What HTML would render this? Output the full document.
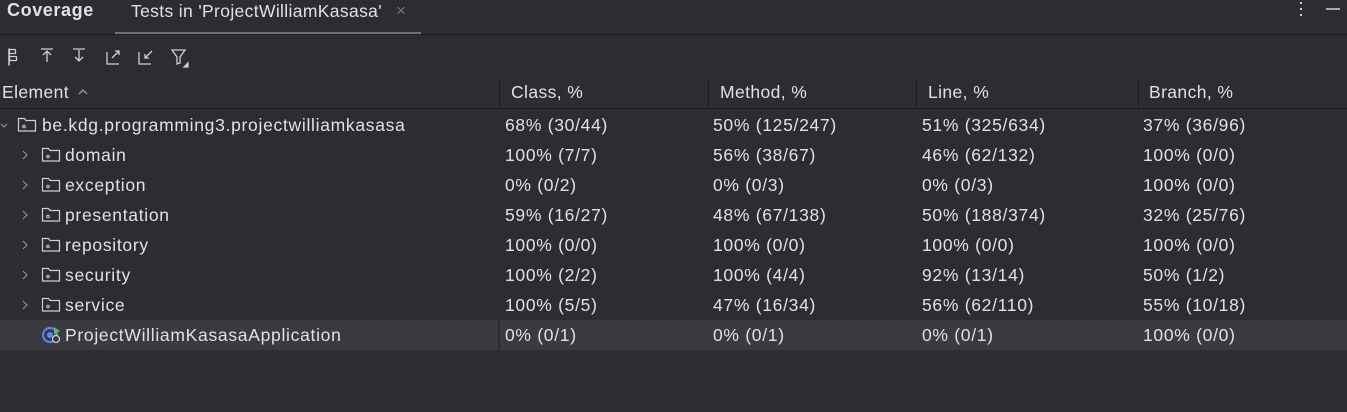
<!DOCTYPE html>
<html><head><meta charset="utf-8"><style>
body{margin:0;width:1347px;height:412px;background:#2b2d30;overflow:hidden;font-family:"Liberation Sans",sans-serif;color:#dfe1e5;position:relative}
.a{position:absolute;white-space:nowrap}
.t{font-size:17.5px;letter-spacing:0.4px}
.r{position:absolute;left:0;width:1347px;height:30px}
.r span{position:absolute;top:5px;font-size:17.5px;letter-spacing:0.7px;white-space:nowrap}
.fold{position:absolute;top:7px;left:41px}
.chev{position:absolute;top:9px;left:20px}
</style></head><body>
<div class="a" style="left:7px;top:0px;font-size:18px;font-weight:bold;color:#dfe1e5;letter-spacing:0.6px">Coverage</div>
<div class="a" style="left:131px;top:1px;font-size:17.5px;letter-spacing:0.35px">Tests in 'ProjectWilliamKasasa'</div>
<div class="a" style="left:396px;top:1px;font-size:17px;color:#6f737a">×</div>
<div class="a" style="left:115px;top:32px;width:306px;height:3px;background:#6f7278"></div>
<div class="a" style="left:0;top:34px;width:1347px;height:1px;background:#1e1f22"></div>
<div class="a" style="left:1300px;top:2px;width:2px;height:2px;background:#ccc;box-shadow:0 6px 0 #ccc,0 12px 0 #ccc"></div>
<div class="a" style="left:1326px;top:8px;width:14px;height:2px;background:#aaa"></div>
<svg class="a" style="left:0;top:44px" width="200" height="30" fill="none" stroke="#ced0d6" stroke-width="1.3">
<rect x="9" y="5" width="0.1" height="16"/>
<rect x="9.5" y="5.5" width="6" height="4" rx="0.5"/>
<rect x="9.5" y="12.5" width="7" height="4" rx="0.5"/>
<path d="M9 5v16"/>
<path d="M41 5h12M47 18v-11M43 11l4-4 4 4"/>
<path d="M73 5h12M79 6v11M75 13l4 4 4-4"/>
<path d="M107 8v12h12M112 14l7-7M115 7h4v4"/>
<path d="M139 8v12h12M152 7l-7 7M145 10v4h4"/>
<path d="M172 6h13l-5 7v6l-3 1v-7z"/>
<path d="M188 19v4h-4z" fill="#ced0d6"/>
</svg>
<div class="a" style="left:0;top:108px;width:1347px;height:1px;background:#1e1f22"></div>
<div class="a t" style="left:2px;top:82px">Element</div>
<svg class="a" style="left:77px;top:87px" width="12" height="10"><path d="M2 7l4-4 4 4" stroke="#aaa" fill="none" stroke-width="1.2"/></svg>
<div class="a" style="left:499px;top:79px;width:1px;height:29px;background:#1e1f22"></div>
<div class="a" style="left:708px;top:79px;width:1px;height:29px;background:#1e1f22"></div>
<div class="a" style="left:916px;top:79px;width:1px;height:29px;background:#1e1f22"></div>
<div class="a" style="left:1138px;top:79px;width:1px;height:29px;background:#1e1f22"></div>
<div class="a t" style="left:511px;top:82px">Class, %</div>
<div class="a t" style="left:720px;top:82px">Method, %</div>
<div class="a t" style="left:928px;top:82px">Line, %</div>
<div class="a t" style="left:1149px;top:82px">Branch, %</div>

<div class="r" style="top:110px">
<svg class="chev" style="left:0" width="10" height="12"><path d="M1 5l3 3 3-3" stroke="#999" fill="none"/></svg>
<svg class="fold" style="left:17px" width="20" height="16"><path d="M1.5 1.5h6l1.5 2h9.5v10.5h-17z" stroke="#ced0d6" fill="none" stroke-width="1.2"/><circle cx="7" cy="9.5" r="1.3" stroke="#ced0d6" fill="none"/></svg>
<span style="left:42px">be.kdg.programming3.projectwilliamkasasa</span>
<span style="left:505px">68% (30/44)</span><span style="left:713px">50% (125/247)</span><span style="left:922px">51% (325/634)</span><span style="left:1143px">37% (36/96)</span></div>

<div class="r" style="top:140px"><svg class="chev" width="10" height="12"><path d="M3 2l4 4-4 4" stroke="#999" fill="none"/></svg><svg class="fold" width="20" height="16"><path d="M1.5 1.5h6l1.5 2h9.5v10.5h-17z" stroke="#ced0d6" fill="none" stroke-width="1.2"/><circle cx="7" cy="9.5" r="1.3" stroke="#ced0d6" fill="none"/></svg>
<span style="left:65px">domain</span><span style="left:505px">100% (7/7)</span><span style="left:713px">56% (38/67)</span><span style="left:922px">46% (62/132)</span><span style="left:1143px">100% (0/0)</span></div>

<div class="r" style="top:170px"><svg class="chev" width="10" height="12"><path d="M3 2l4 4-4 4" stroke="#999" fill="none"/></svg><svg class="fold" width="20" height="16"><path d="M1.5 1.5h6l1.5 2h9.5v10.5h-17z" stroke="#ced0d6" fill="none" stroke-width="1.2"/><circle cx="7" cy="9.5" r="1.3" stroke="#ced0d6" fill="none"/></svg>
<span style="left:65px">exception</span><span style="left:505px">0% (0/2)</span><span style="left:713px">0% (0/3)</span><span style="left:922px">0% (0/3)</span><span style="left:1143px">100% (0/0)</span></div>

<div class="r" style="top:200px"><svg class="chev" width="10" height="12"><path d="M3 2l4 4-4 4" stroke="#999" fill="none"/></svg><svg class="fold" width="20" height="16"><path d="M1.5 1.5h6l1.5 2h9.5v10.5h-17z" stroke="#ced0d6" fill="none" stroke-width="1.2"/><circle cx="7" cy="9.5" r="1.3" stroke="#ced0d6" fill="none"/></svg>
<span style="left:65px">presentation</span><span style="left:505px">59% (16/27)</span><span style="left:713px">48% (67/138)</span><span style="left:922px">50% (188/374)</span><span style="left:1143px">32% (25/76)</span></div>

<div class="r" style="top:230px"><svg class="chev" width="10" height="12"><path d="M3 2l4 4-4 4" stroke="#999" fill="none"/></svg><svg class="fold" width="20" height="16"><path d="M1.5 1.5h6l1.5 2h9.5v10.5h-17z" stroke="#ced0d6" fill="none" stroke-width="1.2"/><circle cx="7" cy="9.5" r="1.3" stroke="#ced0d6" fill="none"/></svg>
<span style="left:65px">repository</span><span style="left:505px">100% (0/0)</span><span style="left:713px">100% (0/0)</span><span style="left:922px">100% (0/0)</span><span style="left:1143px">100% (0/0)</span></div>

<div class="r" style="top:260px"><svg class="chev" width="10" height="12"><path d="M3 2l4 4-4 4" stroke="#999" fill="none"/></svg><svg class="fold" width="20" height="16"><path d="M1.5 1.5h6l1.5 2h9.5v10.5h-17z" stroke="#ced0d6" fill="none" stroke-width="1.2"/><circle cx="7" cy="9.5" r="1.3" stroke="#ced0d6" fill="none"/></svg>
<span style="left:65px">security</span><span style="left:505px">100% (2/2)</span><span style="left:713px">100% (4/4)</span><span style="left:922px">92% (13/14)</span><span style="left:1143px">50% (1/2)</span></div>

<div class="r" style="top:290px"><svg class="chev" width="10" height="12"><path d="M3 2l4 4-4 4" stroke="#999" fill="none"/></svg><svg class="fold" width="20" height="16"><path d="M1.5 1.5h6l1.5 2h9.5v10.5h-17z" stroke="#ced0d6" fill="none" stroke-width="1.2"/><circle cx="7" cy="9.5" r="1.3" stroke="#ced0d6" fill="none"/></svg>
<span style="left:65px">service</span><span style="left:505px">100% (5/5)</span><span style="left:713px">47% (16/34)</span><span style="left:922px">56% (62/110)</span><span style="left:1143px">55% (10/18)</span></div>

<div class="r" style="top:320px;background:#393b40">
<div style="position:absolute;left:498px;top:0;width:2px;height:30px;background:#2b2d30"></div>
<svg style="position:absolute;left:41px;top:5px" width="22" height="20"><circle cx="9" cy="10" r="7" stroke="#548af7" stroke-width="2" fill="none"/><circle cx="9" cy="10" r="3" fill="#548af7"/><path d="M13 2l6 4-6 4z" fill="#5fb865"/><circle cx="15" cy="14" r="3.5" fill="#393b40" stroke="#ced0d6" stroke-width="1.2"/></svg>
<span style="left:65px">ProjectWilliamKasasaApplication</span><span style="left:505px">0% (0/1)</span><span style="left:713px">0% (0/1)</span><span style="left:922px">0% (0/1)</span><span style="left:1143px">100% (0/0)</span></div>
</body></html>
